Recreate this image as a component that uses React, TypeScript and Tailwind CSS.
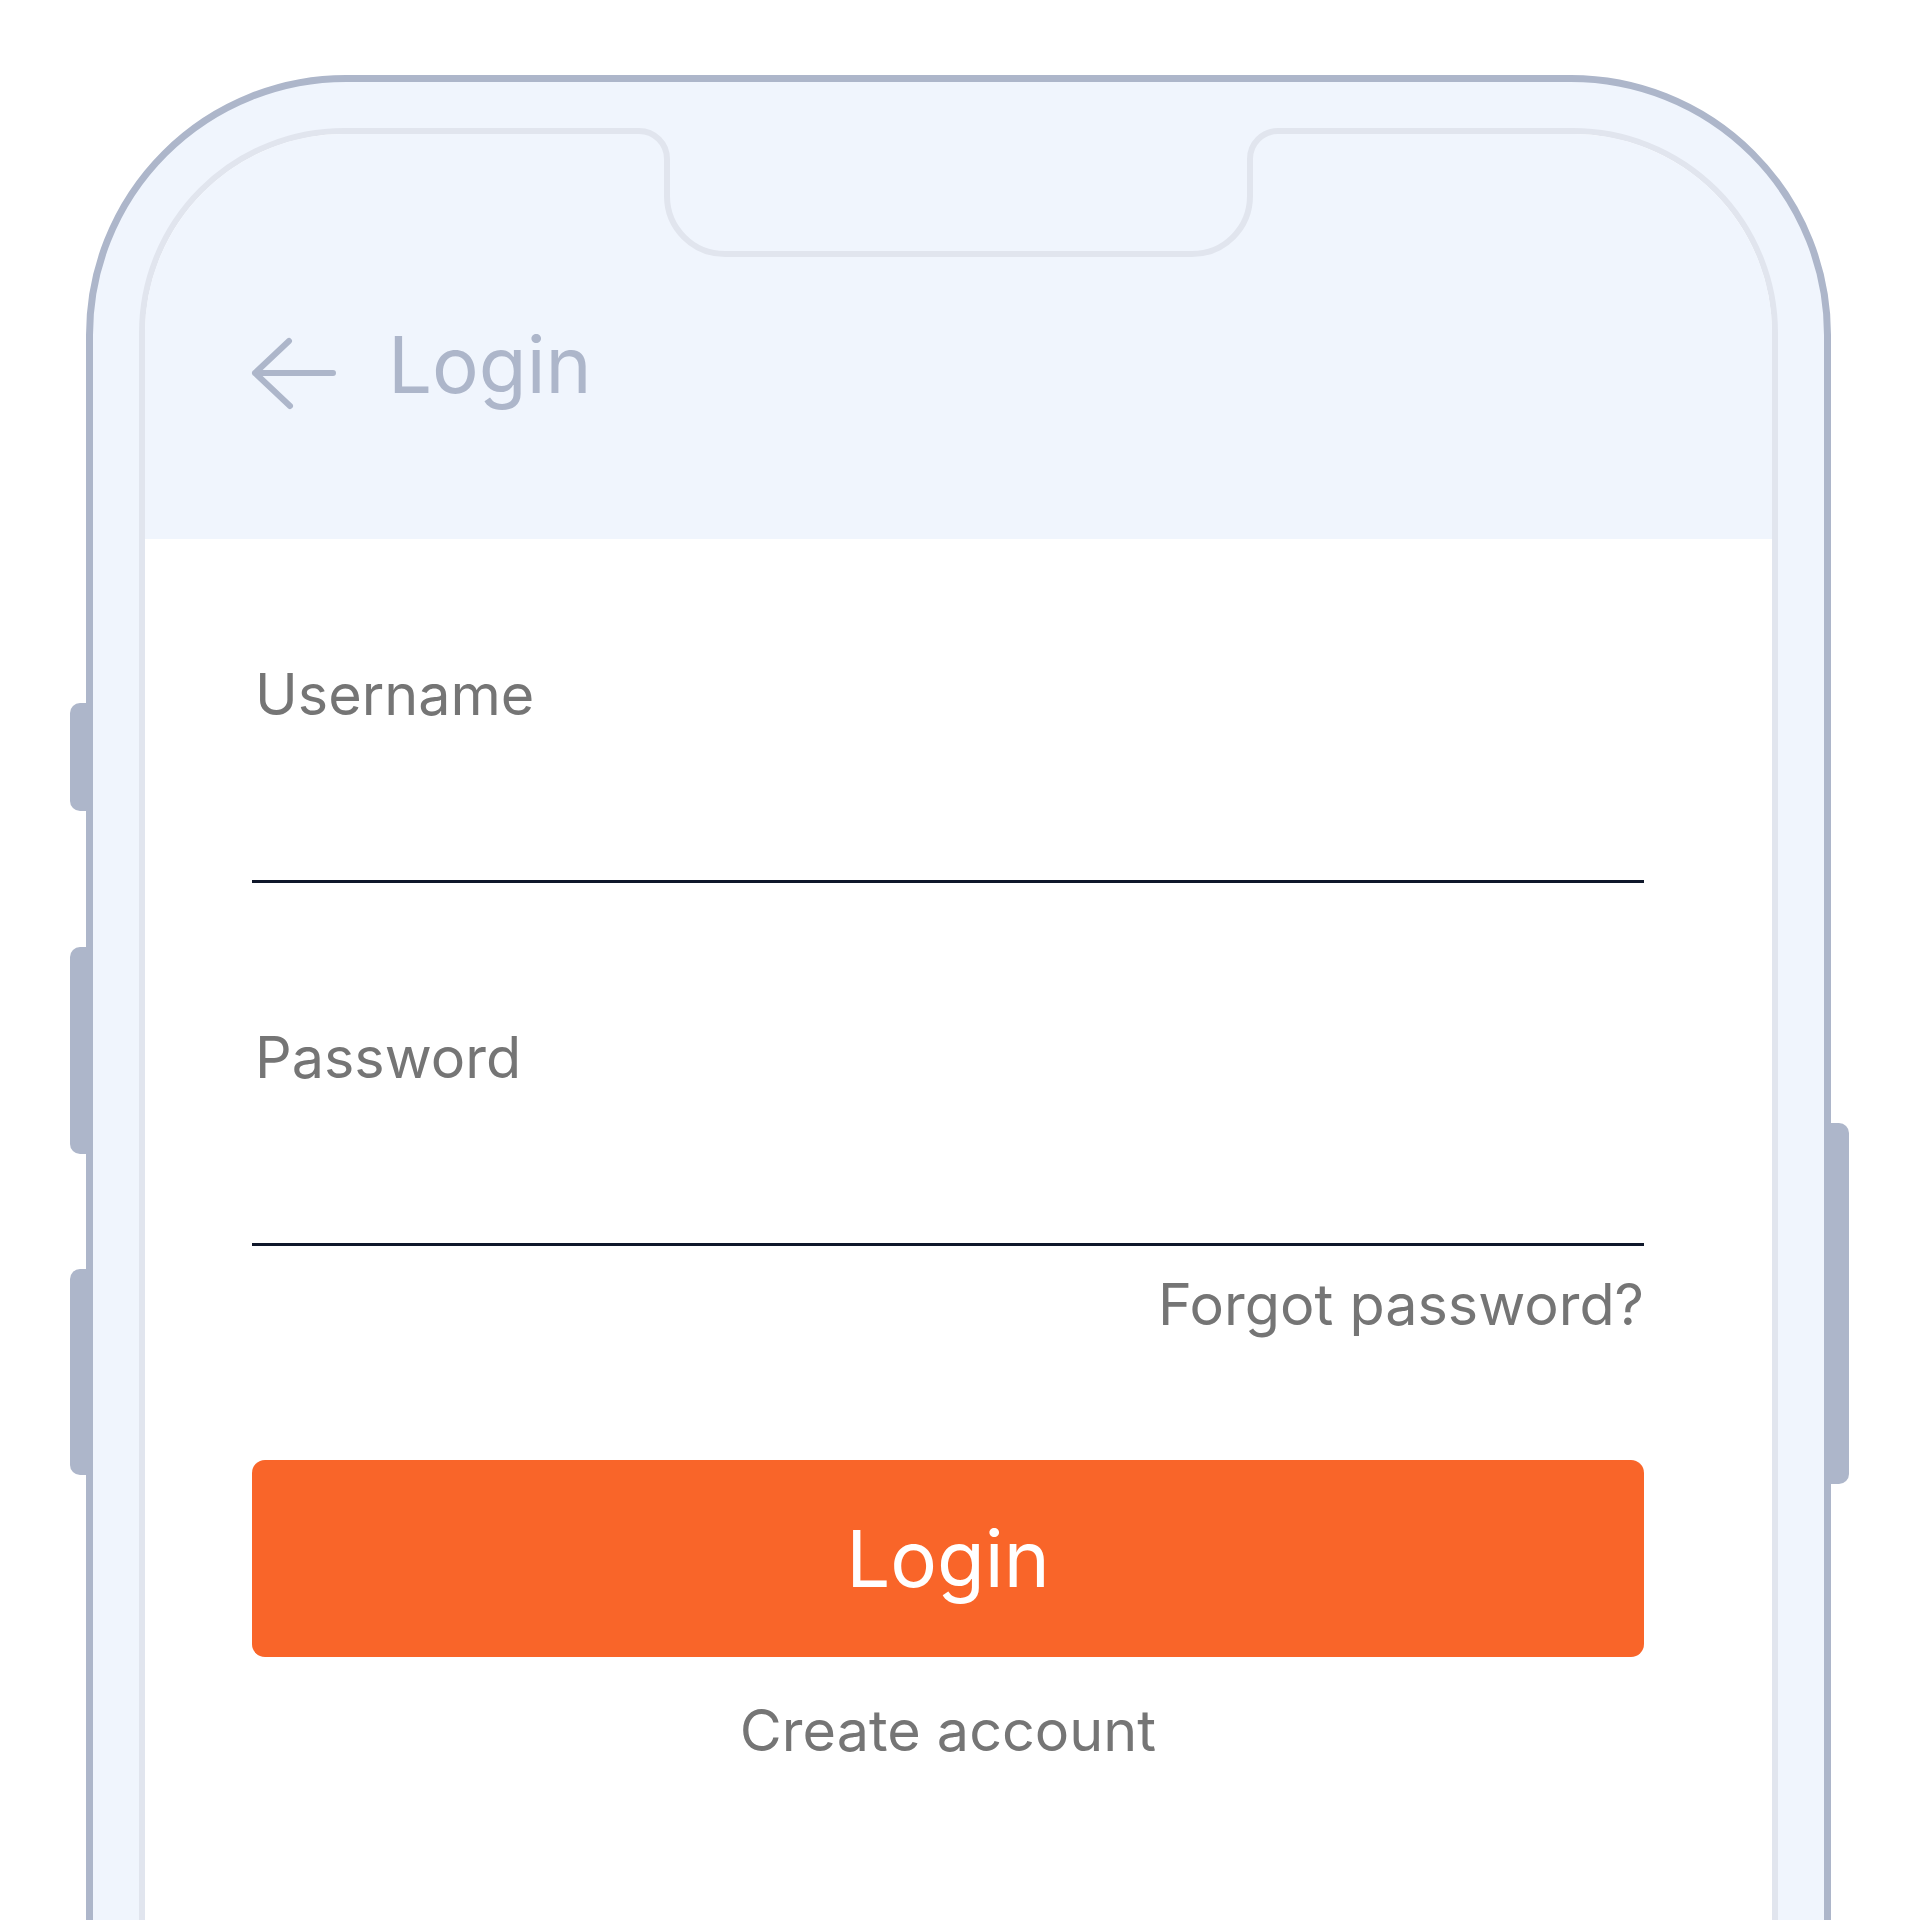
import React from "react";

export default function App() {
  return (
    <div className="w-[1920px] h-[1920px] overflow-hidden bg-white font-[Inter,sans-serif]">
      <div className="relative ml-[86px] mt-[75px] w-[1745px] h-[2100px] rounded-t-[260px] border-[7px] border-[#adb6ca] bg-[#f0f5fd] p-[46px]">
        {/* side buttons */}
        <div className="absolute left-[-23px] top-[621px] w-[16px] h-[108px] rounded-l-[10px] bg-[#adb6ca]" />
        <div className="absolute left-[-23px] top-[865px] w-[16px] h-[207px] rounded-l-[10px] bg-[#adb6ca]" />
        <div className="absolute left-[-23px] top-[1187px] w-[16px] h-[206px] rounded-l-[10px] bg-[#adb6ca]" />
        <div className="absolute right-[-25px] top-[1041px] w-[18px] h-[361px] rounded-r-[10px] bg-[#adb6ca]" />

        {/* screen */}
        <div className="h-full overflow-hidden rounded-t-[205px] border-[6px] border-[#e1e5ee] bg-white">
          <div className="flex h-[405px] items-start bg-[#f0f5fd] pl-[105px] pt-[192px]">
            <svg width="88" height="76" viewBox="0 0 88 76" className="mt-[10px] shrink-0">
              <path
                d="M39 5 L5 37 L40 70 M5 37 H83"
                fill="none"
                stroke="#adb6ca"
                strokeWidth="6"
                strokeLinecap="round"
                strokeLinejoin="round"
              />
            </svg>
            <span className="ml-[50px] text-[78px] leading-[78px] text-[#adb6ca]">Login</span>
          </div>
          <div className="flex w-[1499px] flex-col pl-[107px] pt-[126px]">
            <div className="pl-[3px] text-[57.5px] leading-[58px] text-[#757575]">Username</div>
            <div className="h-[160px] border-b-[3px] border-[#0f172a]" />
            <div className="mt-[145px] pl-[3px] text-[57.5px] leading-[58px] text-[#757575]">Password</div>
            <div className="h-[160px] border-b-[3px] border-[#0f172a]" />
            <div className="mt-[29px] text-right text-[57.5px] leading-[58px] text-[#757575]">Forgot password?</div>
            <button className="mt-[127px] flex h-[197px] items-center justify-center rounded-[13px] bg-[#f96529]">
              <span className="text-[78px] leading-[78px] text-white">Login</span>
            </button>
            <div className="mt-[44px] text-center text-[57.5px] leading-[58px] text-[#757575]">Create account</div>
          </div>
        </div>

        {/* notch */}
        <svg
          width="657"
          height="136"
          viewBox="0 0 657 136"
          className="absolute left-[537px] top-[44px]"
        >
          <path
            d="M0 5 H9 A28 28 0 0 1 37 33 V70 A58 58 0 0 0 95 128 H562 A58 58 0 0 0 620 70 V33 A28 28 0 0 1 648 5 H657 V0 H0 Z"
            fill="#f0f5fd"
          />
          <path
            d="M0 5 H9 A28 28 0 0 1 37 33 V70 A58 58 0 0 0 95 128 H562 A58 58 0 0 0 620 70 V33 A28 28 0 0 1 648 5 H657"
            fill="none"
            stroke="#e1e5ee"
            strokeWidth="6"
          />
        </svg>
      </div>
    </div>
  );
}
